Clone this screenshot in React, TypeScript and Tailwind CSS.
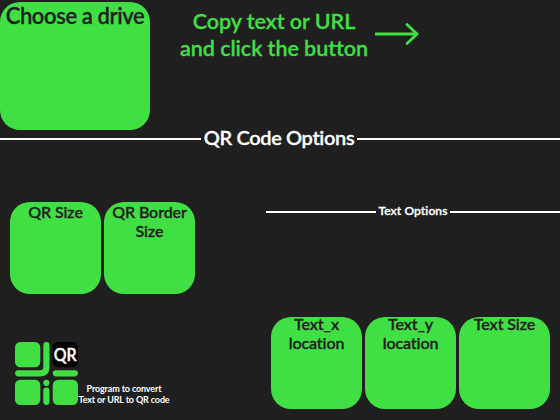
import React from "react";

function Tile({ children, className = "" }: { children?: React.ReactNode; className?: string }) {
  return (
    <div
      className={`flex h-[92px] w-[91px] shrink-0 justify-center rounded-[20px] bg-[#40df44] text-center text-[16px] font-semibold leading-[19px] tracking-[-0.1px] whitespace-nowrap ${className}`}
    >
      {children}
    </div>
  );
}

function Arrow() {
  return (
    <svg width="46" height="26" viewBox="0 0 46 26" fill="none" stroke="#40df44" strokeWidth="2.8" className="mt-[19px] ml-[7px] shrink-0">
      <path d="M0 13H42" />
      <path d="M32 3.5L42 13L32 22.5" strokeLinecap="round" strokeLinejoin="miter" />
    </svg>
  );
}

function Logo() {
  return (
    <svg width="63" height="63" viewBox="0 0 63 63" fill="#40df44" className="shrink-0">
      <rect x="0" y="0" width="25.3" height="25.3" rx="5.5" />
      <rect x="37.7" y="0" width="25.3" height="25.3" rx="5.5" fill="#000" />
      <rect x="0" y="37.7" width="25.3" height="25.3" rx="5.5" />
      <rect x="37.7" y="37.7" width="25.3" height="25.3" rx="5.5" />
      <path d="M31.4 3.2V25.3Q31.4 31.3 25.4 31.3H3.2" fill="none" stroke="#40df44" strokeWidth="6.2" strokeLinecap="round" />
      <path d="M40.9 31.3H59.8" stroke="#40df44" strokeWidth="6.2" strokeLinecap="round" />
      <circle cx="31.4" cy="40.8" r="3.1" />
      <path d="M31.4 48.5V59.8" stroke="#40df44" strokeWidth="6.2" strokeLinecap="round" />
      <text x="50.2" y="19" textAnchor="middle" fill="#fff" stroke="#fff" strokeWidth="0.4" fontSize="16.5" fontWeight="600" textLength="23" lengthAdjust="spacingAndGlyphs">QR</text>
    </svg>
  );
}

export default function App() {
  return (
    <main className="flex h-[420px] w-[560px] flex-col overflow-hidden bg-[#1f1f1f] font-['Lato','Open_Sans',sans-serif] text-[#1f1f1f] [font-variant-ligatures:none] [-webkit-text-stroke:0.3px_currentColor]">
      <header className="flex h-[128px] items-start pt-[2px]">
        <button className="flex h-[128px] w-[150px] shrink-0 justify-center rounded-[20px] bg-[#40df44] text-[22px] font-semibold leading-[27px] tracking-[-0.4px] whitespace-nowrap">
          Choose a drive
        </button>
        <p className="ml-[30px] w-[188px] pt-[6px] text-center text-[21.5px] font-semibold leading-[27px] tracking-[-0.05px] whitespace-nowrap text-[#40df44]">
          Copy text or URL
          <br />
          and click the button
        </p>
        <Arrow />
      </header>

      <div className="flex h-[22px] items-center">
        <div className="h-[2px] w-[201px] bg-white" />
        <h1 className="flex w-[156px] justify-center pb-[4px] text-[20px] font-semibold leading-[22px] tracking-[-0.35px] whitespace-nowrap text-white">QR Code Options</h1>
        <div className="h-[2px] flex-1 bg-white" />
      </div>

      <div className="flex flex-1 justify-between pl-[10px]">
        <section className="flex flex-col pt-[52px]">
          <div className="flex gap-[3px]">
            <Tile>QR Size</Tile>
            <Tile>
              QR Border
              <br />
              Size
            </Tile>
          </div>
          <footer className="mt-[48px] flex pl-[5px]">
            <Logo />
            <p className="w-[92px] pt-[41px] text-center text-[9px] font-bold leading-[11px] tracking-[-0.14px] whitespace-nowrap text-white [-webkit-text-stroke:0]">
              Program to convert
              <br />
              Text or URL to QR code
            </p>
          </footer>
        </section>

        <section className="flex w-[294px] flex-col pt-[54px]">
          <div className="flex h-[16px] items-center">
            <div className="h-[2px] w-[110px] bg-white" />
            <h2 className="flex w-[74px] justify-center pb-[2px] text-[12px] font-semibold leading-[14px] tracking-[0.1px] whitespace-nowrap text-white">Text Options</h2>
            <div className="h-[2px] flex-1 bg-white" />
          </div>
          <div className="mt-[97px] flex gap-[3px] pl-[5px]">
            <Tile>
              <span className="-mt-[3px]">
                Text_x
                <br />
                location
              </span>
            </Tile>
            <Tile>
              <span className="-mt-[3px]">
                Text_y
                <br />
                location
              </span>
            </Tile>
            <Tile>
              <span className="-mt-[3px]">Text Size</span>
            </Tile>
          </div>
        </section>
      </div>
    </main>
  );
}
